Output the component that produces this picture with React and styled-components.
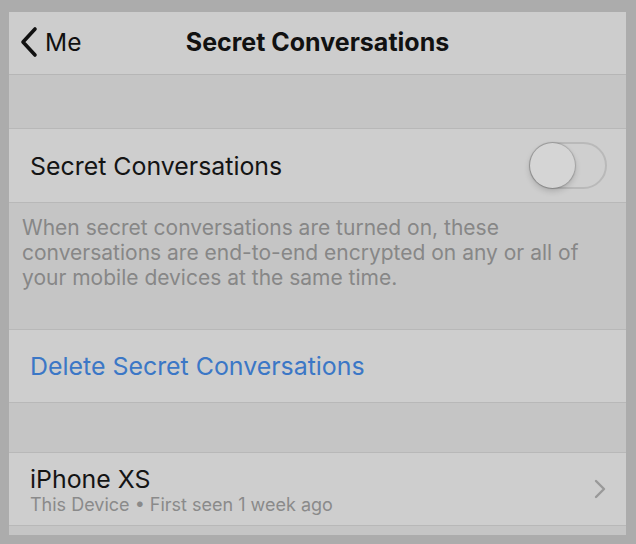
import React from "react";
import styled, { createGlobalStyle } from "styled-components";

const Global = createGlobalStyle`
  html, body { margin: 0; padding: 0; background: #acacac; }
  body { font-family: Inter, "Liberation Sans", Arial, sans-serif; -webkit-font-smoothing: antialiased; }
`;

const Frame = styled.div`
  width: 617px;
  height: 523px;
  margin: 12px 10px 9px 9px;
  background: #c5c5c5;
  display: flex;
  flex-direction: column;
  overflow: hidden;
`;

const NavBar = styled.div`
  height: 62px;
  background: #cdcdcd;
  border-bottom: 1px solid #b6b6b6;
  position: relative;
  display: flex;
  align-items: center;
  justify-content: center;
  flex-shrink: 0;
`;

const Back = styled.div`
  position: absolute;
  left: 7px;
  top: 0;
  bottom: 0;
  display: flex;
  align-items: center;
  gap: 5px;
  font-size: 24.5px;
  color: #111;
  padding-bottom: 3px;
  box-sizing: border-box;
`;

const Title = styled.div`
  font-size: 25px;
  font-weight: 700;
  color: #111;
  padding-bottom: 3px;
`;

const Spacer = styled.div`
  height: ${(p) => p.$h}px;
  flex-shrink: 0;
`;

const Row = styled.div`
  height: ${(p) => p.$h || 73}px;
  background: #cecece;
  border-top: 1px solid #b8b8b8;
  border-bottom: 1px solid #b8b8b8;
  display: flex;
  align-items: center;
  padding: 0 19px 0 21px;
  flex-shrink: 0;
  box-sizing: border-box;
`;

const Label = styled.div`
  flex: 1;
  font-size: 24.9px;
  color: ${(p) => (p.$blue ? "#3b77c6" : "#141414")};
`;

const Toggle = styled.div`
  width: 78px;
  height: 47px;
  border-radius: 24px;
  box-sizing: border-box;
  border: 2px solid #b9b9b9;
  background: #cfcfcf;
  position: relative;
`;

const Knob = styled.div`
  position: absolute;
  left: -1px;
  top: -1px;
  width: 45px;
  height: 45px;
  border-radius: 50%;
  background: #d5d5d5;
  box-shadow: 0 0 1px 1px rgba(0,0,0,0.16), 0 3px 6px rgba(0,0,0,0.18);
`;

const Footer = styled.div`
  padding: 12px 20px 0 13px;
  height: 126px;
  box-sizing: border-box;
  font-size: 21px;
  line-height: 25px;
  color: #878787;
  flex-shrink: 0;
`;

const Stack = styled.div`
  flex: 1;
  display: flex;
  flex-direction: column;
`;

const Sub = styled.div`
  font-size: 18px;
  color: #8a8a8a;
`;

export default function App() {
  return (
    <>
      <Global />
      <Frame>
        <NavBar>
          <Back>
            <svg width="24" height="32" viewBox="0 0 24 32">
              <path d="M19 3 L7 16 L19 29" fill="none" stroke="#111" strokeWidth="3.6" strokeLinecap="round" strokeLinejoin="round" />
            </svg>
            Me
          </Back>
          <Title>Secret Conversations</Title>
        </NavBar>
        <Spacer $h={53} />
        <Row $h={75}>
          <Label>Secret Conversations</Label>
          <Toggle>
            <Knob />
          </Toggle>
        </Row>
        <Footer>
          When secret conversations are turned on, these conversations are end-to-end encrypted on any or all of your mobile devices at the same time.
        </Footer>
        <Row $h={74}>
          <Label $blue>Delete Secret Conversations</Label>
        </Row>
        <Spacer $h={49} />
        <Row $h={74}>
          <Stack>
            <Label>iPhone XS</Label>
            <Sub>This Device • First seen 1 week ago</Sub>
          </Stack>
          <svg width="14" height="20" viewBox="0 0 14 20">
            <path d="M3 2 L11 10 L3 18" fill="none" stroke="#999" strokeWidth="2.4" strokeLinecap="round" strokeLinejoin="round" />
          </svg>
        </Row>
      </Frame>
    </>
  );
}
